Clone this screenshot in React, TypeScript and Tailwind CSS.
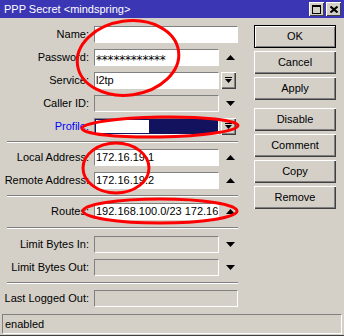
import React from 'react';

const font = "font-['Liberation_Sans',Arial,sans-serif]";

function ArrowUp() {
  return (
    <svg width="9" height="5" viewBox="0 0 9 5" className="block">
      <polygon points="4.5,0 9,5 0,5" fill="#000" />
    </svg>
  );
}

function ArrowDown() {
  return (
    <svg width="9" height="5" viewBox="0 0 9 5" className="block">
      <polygon points="0,0 9,0 4.5,5" fill="#000" />
    </svg>
  );
}

function ComboButton() {
  return (
    <div className="ml-[2px] w-[15px] h-[17px] flex items-center justify-center bg-[#d4d0c8] shadow-[inset_1px_1px_#ffffff,inset_-1px_-1px_#404040,inset_-2px_-2px_#808080]">
      <svg width="9" height="7" viewBox="0 0 9 7" className="block">
        <rect x="1" y="0" width="7" height="1" fill="#000" />
        <polygon points="1,2 8,2 4.5,6" fill="#000" />
      </svg>
    </div>
  );
}

type Row = {
  label: string;
  value?: string;
  kind: 'white' | 'gray' | 'profile';
  after?: 'up' | 'down' | 'combo' | 'none';
  blue?: boolean;
  secret?: boolean;
};

function Field({ label, value, kind, after = 'none', blue, secret }: Row) {
  const wide = after === 'none';
  return (
    <div className="flex items-center h-[17px]">
      <div className={`w-[89px] text-right text-[11px] leading-none whitespace-nowrap ${blue ? 'text-[#0000ff]' : 'text-black'}`}>
        {label}
      </div>
      <div
        className={`ml-[5px] h-[17px] ${wide ? 'w-[144px]' : 'w-[125px]'} border border-t-[#808080] border-l-[#808080] border-b-white border-r-white overflow-hidden relative ${
          kind === 'white' ? 'bg-white' : kind === 'profile' ? 'bg-[#12125e]' : 'bg-[#d4d0c8]'
        }`}
      >
        {kind === 'profile' ? (
          <div className="absolute left-[1px] top-[1px] w-[53px] h-[13px] bg-white" />
        ) : secret ? (
          <div className="pl-[1px] pt-[3px] font-['DejaVu_Sans',sans-serif] text-[12px] leading-[15px] tracking-[-0.2px] whitespace-nowrap text-black">
            {value}
          </div>
        ) : (
          <div className="pl-[1px] text-[11px] leading-[15px] whitespace-nowrap text-black">{value}</div>
        )}
      </div>
      {after === 'up' && (
        <div className="pl-[7px]">
          <ArrowUp />
        </div>
      )}
      {after === 'down' && (
        <div className="pl-[7px]">
          <ArrowDown />
        </div>
      )}
      {after === 'combo' && <ComboButton />}
    </div>
  );
}

function Separator() {
  return <div className="ml-[7px] w-[231px] my-[6px] h-[2px] border-t border-t-[#808080] border-b border-b-white" />;
}

function Button({ label, def }: { label: string; def?: boolean }) {
  return (
    <div
      className={`w-[82px] h-[23px] flex items-center justify-center text-[11px] text-black bg-[#d4d0c8] ${
        def
          ? 'border border-black shadow-[inset_1px_1px_#ffffff,inset_-1px_-1px_#808080]'
          : 'shadow-[inset_1px_1px_#ffffff,inset_-1px_-1px_#404040,inset_-2px_-2px_#808080]'
      }`}
    >
      {label}
    </div>
  );
}

export default function App() {
  return (
    <div className={`relative w-[344px] h-[336px] overflow-hidden bg-[#d4d0c8] ${font} border-b border-b-[#404040]`}>
      {/* title bar */}
      <div className="h-[18px] bg-[#3b36b4] flex items-center pl-[4px] pr-[3px]">
        <div className="text-white text-[11px] leading-none flex-1">PPP Secret &lt;mindspring&gt;</div>
        <div className="flex gap-[2px]">
          <div className="w-[15px] h-[14px] bg-[#d4d0c8] flex items-center justify-center shadow-[inset_1px_1px_#ffffff,inset_-1px_-1px_#404040]">
            <svg width="9" height="9" viewBox="0 0 9 9" className="block">
              <rect x="0.5" y="0.5" width="8" height="8" fill="none" stroke="#000" />
              <rect x="0" y="0" width="9" height="2" fill="#000" />
            </svg>
          </div>
          <div className="w-[15px] h-[14px] bg-[#d4d0c8] flex items-center justify-center shadow-[inset_1px_1px_#ffffff,inset_-1px_-1px_#404040]">
            <svg width="8" height="7" viewBox="0 0 8 7" className="block">
              <path d="M0.5 0.5 L7.5 6.5 M7.5 0.5 L0.5 6.5" stroke="#000" strokeWidth="2" />
            </svg>
          </div>
        </div>
      </div>

      {/* body */}
      <div className="flex pt-[8px]">
        <div className="w-[238px] flex flex-col">
          <div className="flex flex-col gap-[6px]">
            <Field label="Name:" value="" kind="white" />
            <Field label="Password:" value="************" kind="white" after="up" secret />
            <Field label="Service:" value="l2tp" kind="white" after="combo" />
            <Field label="Caller ID:" kind="gray" after="down" />
            <Field label="Profile:" kind="profile" after="combo" blue />
          </div>
          <Separator />
          <div className="flex flex-col gap-[6px]">
            <Field label="Local Address:" value="172.16.19.1" kind="white" after="up" />
            <Field label="Remote Address:" value="172.16.19.2" kind="white" after="up" />
          </div>
          <Separator />
          <Field label="Routes:" value="192.168.100.0/23 172.16" kind="white" after="up" />
          <div className="ml-[7px] w-[231px] mt-[7px] mb-[7px] h-[2px] border-t border-t-[#808080] border-b border-b-white" />
          <div className="flex flex-col gap-[6px]">
            <Field label="Limit Bytes In:" kind="gray" after="down" />
            <Field label="Limit Bytes Out:" kind="gray" after="down" />
          </div>
          <Separator />
          <Field label="Last Logged Out:" kind="gray" />
        </div>

        <div className="ml-[16px] -mt-[1px] flex flex-col">
          <div className="flex flex-col gap-[3px]">
            <Button label="OK" def />
            <Button label="Cancel" />
            <Button label="Apply" />
          </div>
          <div className="mt-[8px] flex flex-col gap-[3px]">
            <Button label="Disable" />
            <Button label="Comment" />
            <Button label="Copy" />
            <Button label="Remove" />
          </div>
        </div>
      </div>

      {/* status bar */}
      <div className="mt-[7px] mx-[2px] h-[20px] border border-t-[#808080] border-l-[#808080] border-b-white border-r-white flex items-center pl-[2px] text-[11px] text-black">
        enabled
      </div>

      {/* red annotation marks */}
      <svg className="absolute inset-0 pointer-events-none" width="344" height="336" viewBox="0 0 344 336">
        <g fill="none" stroke="#ff0000" strokeWidth="3">
          <ellipse cx="128" cy="58" rx="51" ry="37" transform="rotate(-8 128 58)" />
          <ellipse cx="160" cy="127" rx="78" ry="10" transform="rotate(-1 160 127)" />
          <ellipse cx="116" cy="168" rx="33" ry="25" />
          <ellipse cx="160" cy="211" rx="77" ry="12" />
        </g>
      </svg>
    </div>
  );
}
